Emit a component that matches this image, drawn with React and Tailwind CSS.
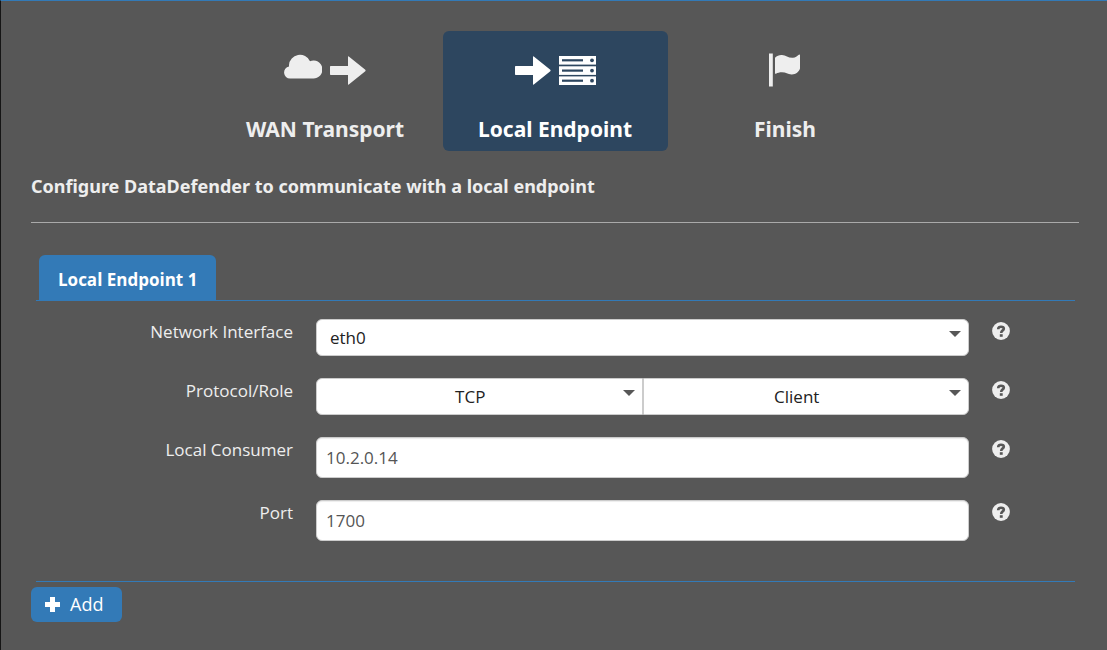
import React from "react";

function ArrowIcon() {
  return (
    <svg width="36" height="29" viewBox="0 0 36 29" fill="currentColor" aria-hidden="true">
      <path d="M.7 10H18V.9Q18 0 18.8.6L35.3 13.8Q36 14.5 35.3 15.2L18.8 28.4Q18 29 18 28.1V19H.7Q0 19 0 18.3V10.7Q0 10 .7 10Z" />
    </svg>
  );
}

function CloudIcon() {
  return (
    <svg width="38" height="32" viewBox="0 0 38 32" fill="currentColor" aria-hidden="true">
      <path d="M6 24.500A6 6 0 0 1 5 12.600V11A11 10.800 0 0 1 26 7.200A9 9 0 1 1 29 24.500Z" />
    </svg>
  );
}

function ServerIcon() {
  return (
    <svg width="37" height="29" viewBox="0 0 37 29" aria-hidden="true">
      {[0, 10.3, 20.4].map((y) => (
        <g key={y}>
          <rect x="0" y={y} width="37" height="8.6" fill="currentColor" />
          <rect x="3" y={y + 3.2} width="21" height="2.2" fill="#2d465f" />
          <circle cx="33" cy={y + 4.3} r="1.9" fill="#2d465f" />
        </g>
      ))}
    </svg>
  );
}

function FlagIcon() {
  return (
    <svg width="32" height="34" viewBox="0 0 32 34" fill="currentColor" aria-hidden="true">
      <path d="M0 0.500H3.800V33.500H0Z" />
      <path d="M6 4.800C8 2.600 10.500 1.800 13 2C17 2.300 19.500 5.200 24 4.800C26.500 4.500 28 3.300 29.800 1.700Q31 .9 31 2.200V15.500C30 18.900 26.500 21.600 22.500 21.400C18.500 21.200 17 19.200 13 19.200C10.500 19.200 8.500 19.700 7 20.700Q6 21.200 6 20Z" />
    </svg>
  );
}

function HelpIcon() {
  return (
    <svg width="18" height="18" viewBox="0 0 18 18" aria-hidden="true">
      <circle cx="9" cy="9" r="8.9" fill="currentColor" />
      <path d="M6.200 7.300C6.200 5.300 7.300 4.700 9 4.700C10.800 4.700 11.800 5.400 11.800 6.700C11.800 8.500 9.200 8.300 9.200 11" fill="none" stroke="#575757" strokeWidth="2.6" />
      <rect x="7.800" y="12.200" width="2.900" height="2.600" fill="#575757" />
    </svg>
  );
}

function PlusIcon() {
  return (
    <svg width="15" height="15" viewBox="0 0 15 15" fill="currentColor" aria-hidden="true">
      <path d="M5 0H10V5H15V10H10V15H5V10H0V5H5Z" />
    </svg>
  );
}

function Step({ label, active, children }) {
  return (
    <button
      type="button"
      aria-current={active ? "step" : undefined}
      className={
        "flex h-30 w-full max-w-[225px] flex-col items-center rounded-md pt-[23px] font-['Noto_Sans',sans-serif] text-[21px] leading-7 font-bold " +
        (active ? "bg-[#2d465f] text-white" : "text-[#eeeeee]")
      }
    >
      <span className="flex h-8 items-center gap-2">{children}</span>
      <span className="mt-[29px]">{label}</span>
    </button>
  );
}

function Row({ id, label, children }) {
  return (
    <div className="grid grid-cols-[257fr_653fr_83fr] gap-x-[23px]">
      <label htmlFor={id} className="pt-[3px] text-right leading-5 text-[#eeeeee]">
        {label}
      </label>
      <div className="flex">{children}</div>
      <div className="pt-[3px]">
        <button type="button" aria-label={"Help: " + label} className="block text-[#eeeeee]">
          <HelpIcon />
        </button>
      </div>
    </div>
  );
}

function Select({ id, label, value, className, centered }) {
  return (
    <div className="relative flex-1">
      <select
        id={id}
        aria-label={label}
        defaultValue={value}
        className={
          "h-[37px] w-full appearance-none border border-[#cccccc] bg-white text-[#222222] " +
          (centered ? "pr-[26px] pl-2 [text-align-last:center] " : "px-[13px] ") +
          className
        }
      >
        <option>{value}</option>
      </select>
      <svg width="12" height="6" viewBox="0 0 12 6" className="pointer-events-none absolute top-3 right-2" aria-hidden="true">
        <path d="M0 0H12L6 6Z" fill="#575757" />
      </svg>
    </div>
  );
}

function TextBox({ id, value }) {
  return (
    <input
      id={id}
      type="text"
      defaultValue={value}
      className="h-[41px] w-full rounded-md border border-[#cccccc] bg-white px-[9px] text-[#555555] shadow-[inset_0_1px_1px_rgba(0,0,0,0.075)]"
    />
  );
}

export default function App() {
  return (
    <main className="min-h-screen border-t border-l border-t-[#337ab7] border-l-[#151515] bg-[#575757] pt-[30px] pr-7 pb-7 pl-[30px] font-['Open_Sans','Noto_Sans',sans-serif] text-[17px]">
      <nav className="flex justify-center gap-[5px]">
        <Step label="WAN Transport">
          <CloudIcon />
          <ArrowIcon />
        </Step>
        <Step label="Local Endpoint" active>
          <ArrowIcon />
          <ServerIcon />
        </Step>
        <Step label="Finish">
          <FlagIcon />
        </Step>
      </nav>

      <h1 className="border-b border-[#aaaaaa] pt-[21px] pb-[22px] font-['Noto_Sans',sans-serif] text-[18px] leading-7 font-bold text-[#eeeeee]">
        Configure DataDefender to communicate with a local endpoint
      </h1>

      <section className="mt-8 mr-1 ml-[5px] border-b border-[#337ab7] pb-10">
        <div role="tablist" className="flex border-b border-[#337ab7] pl-[3px]">
          <button type="button" role="tab" aria-selected="true" className="h-[45px] rounded-t-md bg-[#337ab7] px-[19px] pt-1 text-[17px] font-bold text-white">
            Local Endpoint 1
          </button>
        </div>
        <div className="mt-[18px] flex flex-col gap-[22px]">
          <Row id="interface" label="Network Interface">
            <Select id="interface" value="eth0" className="rounded-md" />
          </Row>
          <Row id="protocol" label="Protocol/Role">
            <Select id="protocol" value="TCP" centered className="rounded-l-md" />
            <Select id="role" label="Role" value="Client" centered className="rounded-r-md" />
          </Row>
          <Row id="consumer" label="Local Consumer">
            <TextBox id="consumer" value="10.2.0.14" />
          </Row>
          <Row id="port" label="Port">
            <TextBox id="port" value="1700" />
          </Row>
        </div>
      </section>

      <button type="button" className="mt-[5px] flex h-[35px] items-center gap-2.5 rounded-md bg-[#337ab7] pr-[19px] pl-3.5 text-[18px] text-white">
        <PlusIcon />
        Add
      </button>
    </main>
  );
}
